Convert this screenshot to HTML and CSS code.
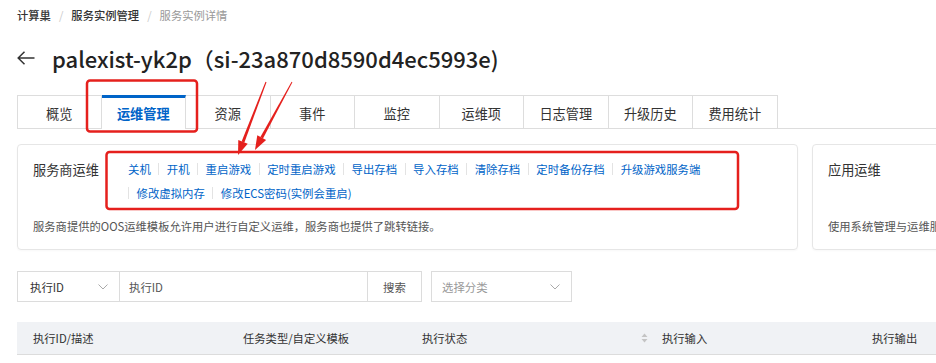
FILE: index.html
```html
<!DOCTYPE html>
<html lang="zh-CN">
<head>
<meta charset="utf-8">
<title>服务实例详情</title>
<link rel="stylesheet" href="styles.css">
</head>
<body>
<div class="page">
  <nav class="crumbs">
    <span class="crumb">计算巢</span><span class="sep">/</span><span class="crumb">服务实例管理</span><span class="sep">/</span><span class="crumb current">服务实例详情</span>
  </nav>

  <h1 class="title">
    <svg class="back" width="18" height="14" viewBox="0 0 18 14"><path d="M1 7H17.5M7.5 0.8L1.2 7L7.5 13.2" fill="none" stroke="#333" stroke-width="1.5"/></svg>
    <span>palexist-yk2p（si-23a870d8590d4ec5993e)</span>
  </h1>

  <div class="tabs">
    <div class="tab">概览</div>
    <div class="tab active">运维管理</div>
    <div class="tab">资源</div>
    <div class="tab">事件</div>
    <div class="tab">监控</div>
    <div class="tab">运维项</div>
    <div class="tab">日志管理</div>
    <div class="tab">升级历史</div>
    <div class="tab">费用统计</div>
  </div>

  <div class="cards">
    <section class="card card-main">
      <div class="card-head">
        <h2 class="card-title">服务商运维</h2>
        <ul class="ops">
          <li>关机</li><li>开机</li><li>重启游戏</li><li>定时重启游戏</li><li>导出存档</li><li>导入存档</li><li>清除存档</li><li>定时备份存档</li><li>升级游戏服务端</li><li>修改虚拟内存</li><li>修改ECS密码(实例会重启)</li>
        </ul>
      </div>
      <p class="desc">服务商提供的OOS运维模板允许用户进行自定义运维，服务商也提供了跳转链接。</p>
    </section>
    <section class="card card-side">
      <div class="card-head">
        <h2 class="card-title">应用运维</h2>
      </div>
      <p class="desc">使用系统管理与运维服务对应用进行运维。</p>
    </section>
  </div>

  <div class="filters">
    <div class="select sel-id"><span>执行ID</span><svg class="chev" width="10" height="6" viewBox="0 0 10 6"><path d="M0.5 0.5L5 5L9.5 0.5" fill="none" stroke="#aaa" stroke-width="1"/></svg></div>
    <div class="input">执行ID</div>
    <div class="btn">搜索</div>
    <div class="select sel-cat"><span class="ph">选择分类</span><svg class="chev" width="10" height="6" viewBox="0 0 10 6"><path d="M0.5 0.5L5 5L9.5 0.5" fill="none" stroke="#aaa" stroke-width="1"/></svg></div>
  </div>

  <div class="thead">
    <div class="th">执行ID/描述</div>
    <div class="th">任务类型/自定义模板</div>
    <div class="th th-sort"><span>执行状态</span><svg width="7" height="10" viewBox="0 0 7 10"><path d="M3.5 0.5L6.5 4H0.5Z" fill="#c4c4c4"/><path d="M3.5 9.5L6.5 6H0.5Z" fill="#c4c4c4"/></svg></div>
    <div class="th">执行输入</div>
    <div class="th">执行输出</div>
  </div>

  <svg class="annot" width="936" height="363" viewBox="0 0 936 363">
    <rect x="87" y="80.5" width="110" height="51" rx="3" fill="none" stroke="#e5201d" stroke-width="2.5"/>
    <rect x="106.5" y="152" width="631.5" height="57" rx="3" fill="none" stroke="#e5201d" stroke-width="2.5"/>
    <polygon points="266.5,82.2 265.5,81.8 241.6,141.4 244.4,142.4" fill="#e5201d"/>
    <polygon points="238,155 247.7,143.7 238.3,140.1" fill="#e5201d"/>
    <polygon points="292.4,82.2 291.6,81.8 260.4,137 263,138.4" fill="#e5201d"/>
    <polygon points="255,150 266.1,140.1 257.3,135.3" fill="#e5201d"/>
  </svg>
</div>
</body>
</html>
```

FILE: styles.css
```css
* { box-sizing: border-box; }
html, body { margin: 0; padding: 0; background: #fff; }
body {
  font-family: "Noto Sans CJK SC", "Noto Sans", sans-serif;
  color: #333;
}
.page {
  position: relative;
  width: 936px;
  height: 363px;
  overflow: hidden;
  padding: 7px 0 0 17px;
}

/* breadcrumb */
.crumbs {
  display: flex;
  align-items: center;
  height: 16px;
  font-size: 11.3px;
  line-height: 16px;
}
.crumb { color: #333; font-weight: 500; }
.crumb.current { color: #999; font-weight: 400; }
.sep { color: #ccc; margin: 0 8px; }

/* title */
.title {
  display: flex;
  align-items: center;
  gap: 17px;
  margin: 20px 0 0 0;
  height: 30px;
  font-size: 22px;
  font-weight: 500;
  line-height: 30px;
  color: #222;
}
.back { flex: none; }

/* tabs */
.tabs {
  display: flex;
  margin-top: 22px;
  height: 34px;
  border-bottom: 1px solid #ddd;
}
.tab {
  flex: 0 0 84.5px;
  height: 33px;
  border: 1px solid #ddd;
  border-bottom: none;
  border-left: none;
  display: flex;
  align-items: center;
  justify-content: center;
  padding-top: 2px;
  font-size: 13.2px;
  color: #333;
  background: #fff;
}
.tab:first-child { border-left: 1px solid #ddd; }
.tab.active {
  border-top: 3px solid #0064c8;
  height: 34px;
  margin-bottom: -1px;
  color: #0064c8;
  font-weight: 700;
  padding-top: 0;
}

/* cards */
.cards {
  display: flex;
  gap: 14px;
  margin-top: 15px;
}
.card {
  flex: none;
  height: 106px;
  border: 1px solid #e6e6e6;
  border-radius: 4px;
  padding: 15px 15px 14px;
  display: flex;
  flex-direction: column;
  box-shadow: 0 1px 2px rgba(0,0,0,0.03);
}
.card-main { width: 781px; }
.card-side { width: 300px; }
.card-head { display: flex; align-items: flex-start; }
.card-title {
  flex: 0 0 95px;
  margin: 0;
  font-size: 13.2px;
  font-weight: 400;
  line-height: 20px;
  color: #333;
}
.ops {
  flex: 1;
  display: flex;
  flex-wrap: wrap;
  list-style: none;
  margin: -3px 0 0 0;
  padding: 0;
  font-size: 11.4px;
  line-height: 24px;
  color: #0064c8;
}
.ops li {
  display: flex;
  align-items: center;
  padding-right: 7.5px;
}
.ops li::before {
  content: "";
  width: 1px;
  height: 12px;
  background: #e3e3e3;
  margin-right: 7.5px;
}
.ops li:first-child::before { display: none; }
.desc {
  margin: auto 0 0 0;
  font-size: 11.3px;
  line-height: 18px;
  color: #555;
  white-space: nowrap;
}

/* filters */
.filters {
  display: flex;
  margin-top: 21px;
  height: 31px;
  font-size: 11.4px;
}
.select, .input, .btn {
  height: 31px;
  border: 1px solid #dcdcdc;
  display: flex;
  align-items: center;
}
.sel-id {
  width: 103px;
  padding: 0 11px 0 12px;
  justify-content: space-between;
  color: #333;
}
.input {
  width: 248px;
  border-left: none;
  padding-left: 9px;
  color: #555;
}
.btn {
  width: 55px;
  border-left: 1px solid #dcdcdc;
  margin-left: -1px;
  justify-content: center;
  color: #555;
}
.sel-cat {
  width: 141px;
  margin-left: 9px;
  padding: 0 11px 0 10px;
  justify-content: space-between;
}
.ph { color: #999; }
.chev { flex: none; }

/* table header */
.thead {
  display: grid;
  grid-template-columns: 210px 179px 240px 210px 1fr;
  align-items: center;
  margin-top: 20px;
  height: 33px;
  width: 940px;
  padding-left: 16px;
  background: #f0f2f5;
  border-bottom: 1px solid #dcdcdc;
  font-size: 11.3px;
  color: #333;
}
.th-sort {
  display: flex;
  align-items: center;
  justify-content: space-between;
  padding-right: 14px;
}

/* annotations overlay */
.annot {
  position: absolute;
  left: 0;
  top: 0;
  pointer-events: none;
}
```
